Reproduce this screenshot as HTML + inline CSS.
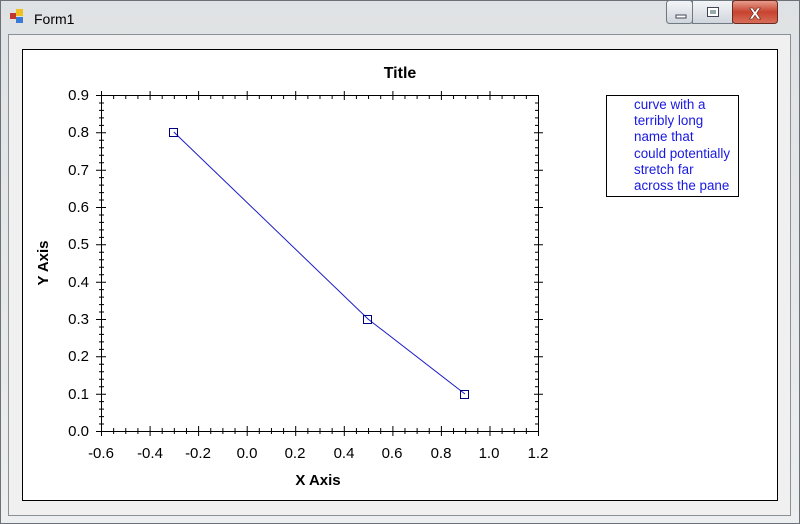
<!DOCTYPE html>
<html><head><style>
html,body{margin:0;padding:0;width:800px;height:524px;overflow:hidden;background:#e9ecef;}
</style></head><body>
<svg width="800" height="524" xmlns="http://www.w3.org/2000/svg" style="position:absolute;left:0;top:0">
<defs>
<linearGradient id="tb" x1="0" y1="0" x2="0" y2="1"><stop offset="0" stop-color="#dfe2e4"/><stop offset="1" stop-color="#eceeef"/></linearGradient>
<linearGradient id="cl" x1="0" y1="0" x2="0" y2="1"><stop offset="0" stop-color="#e8a090"/><stop offset="0.5" stop-color="#c7432f"/><stop offset="1" stop-color="#d8705a"/></linearGradient>
<linearGradient id="bt" x1="0" y1="0" x2="0" y2="1"><stop offset="0" stop-color="#f4f6f8"/><stop offset="1" stop-color="#cfd5dc"/></linearGradient>
</defs>
<rect x="0" y="0" width="800" height="524" fill="url(#tb)"/>
<rect x="0.5" y="0.5" width="799" height="523" fill="none" stroke="#6b7176"/>
<rect x="10" y="13" width="6" height="6" fill="#c0392b"/><rect x="16" y="9" width="7" height="7" fill="#f0c020"/><rect x="16" y="17" width="7" height="6" fill="#3a7bd5"/>
<text x="34" y="24" font-family="Liberation Sans, sans-serif" font-size="14" fill="#000">Form1</text>
<rect x="666.5" y="0.5" width="26" height="23" rx="3" fill="url(#bt)" stroke="#707880"/>
<rect x="676" y="15" width="10" height="3" fill="#fff" stroke="#445"/>
<rect x="692.5" y="0.5" width="40" height="23" fill="url(#bt)" stroke="#707880"/>
<rect x="707.5" y="7.5" width="11" height="9" fill="#fff" stroke="#445"/><rect x="710" y="10" width="6" height="4" fill="#9aa"/>
<rect x="732.5" y="0.5" width="45" height="23" rx="3" fill="url(#cl)" stroke="#6a2a20"/>
<text x="755" y="19" text-anchor="middle" font-family="DejaVu Sans, sans-serif" font-weight="bold" font-size="15" fill="#fff" stroke="#5a2018" stroke-width="0.6">X</text>
<rect x="8.5" y="34.5" width="782" height="481" fill="#f0f0f0" stroke="#8a9096"/>
<rect x="22.5" y="49.5" width="755" height="451" fill="#fff" stroke="#000"/>
<text x="400" y="78" text-anchor="middle" font-family="Liberation Sans, sans-serif" font-weight="bold" font-size="16">Title</text>
<rect x="101.5" y="95.5" width="437" height="336" fill="none" stroke="#000"/>
<g stroke="#000" stroke-width="1" fill="none">
<path d="
M101.5 426V436M150.1 426V436M198.6 426V436M247.2 426V436M295.7 426V436M344.3 426V436M392.9 426V436M441.4 426V436M490 426V436M538.5 426V436
M101.5 91V100M150.1 91V100M198.6 91V100M247.2 91V100M295.7 91V100M344.3 91V100M392.9 91V100M441.4 91V100M490 91V100
M96 431.5H106M96 394.2H106M96 356.8H106M96 319.5H106M96 282.2H106M96 244.8H106M96 207.5H106M96 170.2H106M96 132.8H106M96 95.5H106
M534 394.2H543M534 356.8H543M534 319.5H543M534 282.2H543M534 244.8H543M534 207.5H543M534 170.2H543M534 132.8H543
"/>
</g>
<g id="minor" stroke="#000" stroke-width="1"></g>
<g font-family="Liberation Sans, sans-serif" font-size="15" fill="#000" text-anchor="end">
<text x="89" y="436">0.0</text><text x="89" y="399">0.1</text><text x="89" y="361">0.2</text><text x="89" y="324">0.3</text><text x="89" y="287">0.4</text><text x="89" y="249">0.5</text><text x="89" y="212">0.6</text><text x="89" y="175">0.7</text><text x="89" y="137">0.8</text><text x="89" y="100">0.9</text>
</g>
<g font-family="Liberation Sans, sans-serif" font-size="15" fill="#000" text-anchor="middle">
<text x="101" y="458">-0.6</text><text x="150" y="458">-0.4</text><text x="198" y="458">-0.2</text><text x="247" y="458">0.0</text><text x="295" y="458">0.2</text><text x="344" y="458">0.4</text><text x="392" y="458">0.6</text><text x="441" y="458">0.8</text><text x="489" y="458">1.0</text><text x="538" y="458">1.2</text>
</g>
<text x="318" y="485" text-anchor="middle" font-family="Liberation Sans, sans-serif" font-weight="bold" font-size="15">X Axis</text>
<text transform="translate(48,263) rotate(-90)" text-anchor="middle" font-family="Liberation Sans, sans-serif" font-weight="bold" font-size="15">Y Axis</text>
<polyline points="173.8,132 368,319 465,394" fill="none" stroke="#1c1cc8" stroke-width="1"/>
<g fill="none" stroke="#000080"><rect x="169.5" y="128.5" width="8" height="8"/><rect x="363.5" y="315.5" width="8" height="8"/><rect x="460.5" y="390.5" width="8" height="8"/></g>
<rect x="606.5" y="95.5" width="132" height="101" fill="#fff" stroke="#000"/>
<g font-family="Liberation Sans, sans-serif" font-size="13.4" fill="#1818e0">
<text x="634" y="109">curve with a</text><text x="634" y="125">terribly long</text><text x="634" y="141">name that</text><text x="634" y="158">could potentially</text><text x="634" y="174">stretch far</text><text x="634" y="190">across the pane</text>
</g>
</svg>
<script>
var g=document.getElementById('minor'),d='';
for(var i=0;i<36;i++){if(i%4==0)continue;var x=101.5+i*437/36;d+='M'+x+' 428V434M'+x+' 95V99';}
for(var j=0;j<45;j++){if(j%5==0)continue;var y=431.5-j*336/45;d+='M99 '+y+'H104M535 '+y+'H539';}
var p=document.createElementNS('http://www.w3.org/2000/svg','path');p.setAttribute('d',d);p.setAttribute('fill','none');g.appendChild(p);
</script>
</body></html>
